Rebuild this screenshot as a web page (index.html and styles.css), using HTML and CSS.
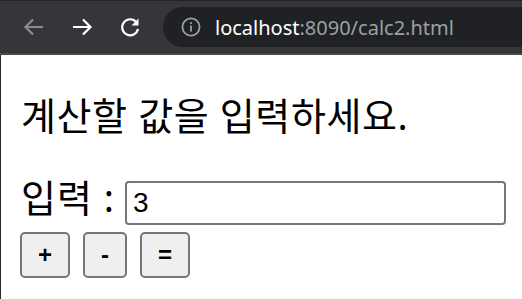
FILE: index.html
```html
<!DOCTYPE html>
<html lang="ko">
<head>
    <meta charset="UTF-8">
    <title>calc2</title>
    <link rel="stylesheet" href="styles.css">
</head>
<body>
    <div class="toolbar">
        <span class="nav-btn">
            <svg width="22" height="22" viewBox="0 0 22 22"><path d="M20 11H3M10 3.5L2.5 11 10 18.5" fill="none" stroke="#8b8c8e" stroke-width="2.2"/></svg>
        </span>
        <span class="nav-btn">
            <svg width="22" height="22" viewBox="0 0 22 22"><path d="M2 11h17M12 3.5l7.5 7.5-7.5 7.5" fill="none" stroke="#ffffff" stroke-width="2.2"/></svg>
        </span>
        <span class="nav-btn">
            <svg width="22" height="22" viewBox="0 0 22 22"><path d="M17.4 6.2A8 8 0 1 0 19 13" fill="none" stroke="#ffffff" stroke-width="2.2"/><path d="M19.5 2.5v7h-7z" fill="#ffffff"/></svg>
        </span>
        <div class="omnibox">
            <svg width="20" height="20" viewBox="0 0 20 20"><circle cx="10" cy="10" r="8.6" fill="none" stroke="#9aa0a6" stroke-width="1.8"/><rect x="9.1" y="8.6" width="1.8" height="6" fill="#9aa0a6"/><rect x="9.1" y="5.2" width="1.8" height="1.9" fill="#9aa0a6"/></svg>
            <span class="url"><span class="host">localhost</span>:8090/calc2.html</span>
        </div>
    </div>

    <div class="page">
        <p class="title">계산할 값을 입력하세요.</p>
        <div class="input-row">
            <label for="num">입력 :</label>
            <input type="text" id="num" value="3">
        </div>
        <div class="buttons">
            <button>+</button>
            <button>-</button>
            <button>=</button>
        </div>
    </div>
</body>
</html>
```

FILE: styles.css
```css
html, body {
    margin: 0;
    height: 100%;
    overflow: hidden;
    background: #ffffff;
}
body {
    display: flex;
    flex-direction: column;
}
.toolbar {
    display: flex;
    align-items: center;
    height: 52px;
    padding-left: 10px;
    background: #35363a;
    border-top: 1px solid #242526;
    border-bottom: 2px solid #4a4a4c;
}
.nav-btn {
    display: flex;
    justify-content: center;
    align-items: center;
    width: 48px;
    height: 40px;
}
.omnibox {
    display: flex;
    align-items: center;
    flex: 1;
    height: 40px;
    margin-left: 9px;
    padding-left: 18px;
    background: #202124;
    border-radius: 20px 0 0 20px;
    overflow: hidden;
}
.url {
    margin-left: 14px;
    font-family: "Noto Sans", sans-serif;
    font-size: 20px;
    color: #9aa0a6;
    white-space: nowrap;
}
.host {
    color: #ffffff;
}
.page {
    flex: 1;
    padding: 38px 0 0 19px;
    border-left: 1px solid #2b2b2b;
    font-family: "Noto Sans", "Noto Sans CJK KR", sans-serif;
    color: #000000;
}
.title {
    margin: 0;
    padding-left: 1px;
    font-size: 38px;
    line-height: 44px;
    letter-spacing: 0.6px;
}
.input-row {
    display: flex;
    align-items: baseline;
    margin-top: 38px;
    padding-left: 1px;
    font-size: 38px;
    line-height: 44px;
}
.input-row label {
    width: 104px;
    letter-spacing: 1px;
}
.input-row input {
    box-sizing: border-box;
    width: 381px;
    height: 44px;
    padding: 0 6px;
    border: 2px solid #767676;
    border-radius: 4px;
    font-family: "Liberation Sans", sans-serif;
    font-size: 28px;
    color: #000000;
}
.buttons {
    display: flex;
    gap: 13px;
    margin-top: 7px;
}
.buttons button {
    height: 46px;
    padding: 0 16px;
    background: #efefef;
    border: 2px solid #767676;
    border-radius: 5px;
    font-family: "Liberation Sans", sans-serif;
    font-size: 24px;
    font-weight: bold;
    color: #000000;
}
```
